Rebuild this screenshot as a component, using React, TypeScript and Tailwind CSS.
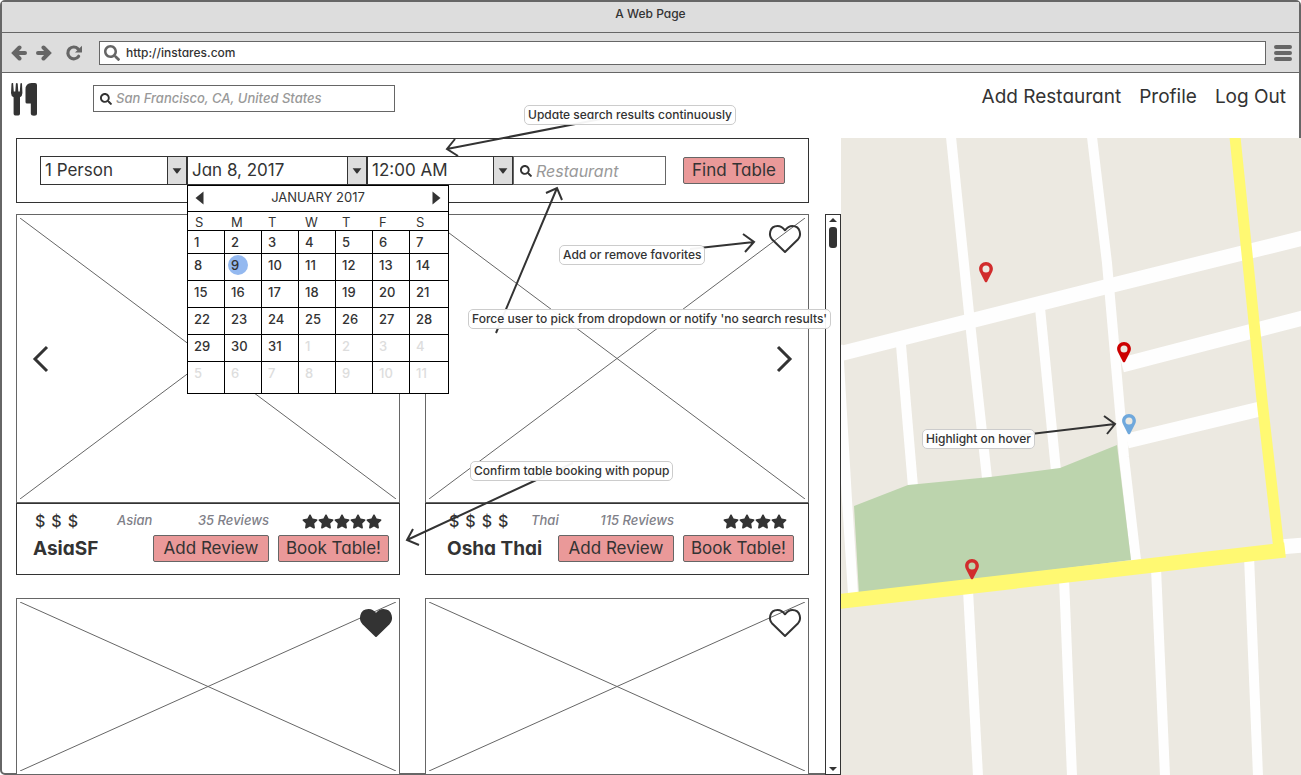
import React from "react";
import { FaSearch, FaStar } from "react-icons/fa";

const weekdays = ["S", "M", "T", "W", "T", "F", "S"];

const weeks = [
  { height: "h-[23px]", days: [1, 2, 3, 4, 5, 6, 7] },
  { height: "h-[27px]", days: [8, 9, 10, 11, 12, 13, 14] },
  { height: "h-[27px]", days: [15, 16, 17, 18, 19, 20, 21] },
  { height: "h-[27px]", days: [22, 23, 24, 25, 26, 27, 28] },
  { height: "h-[27px]", days: [29, 30, 31, 1, 2, 3, 4] },
  { height: "h-[32px]", days: [5, 6, 7, 8, 9, 10, 11] },
];

function ArrowIcon({ direction }: { direction: "left" | "right" }) {
  return (
    <svg viewBox="0 0 16 16" className="size-4 fill-none stroke-[#666]" strokeWidth="4" strokeLinecap="round">
      <path
        d={direction === "left" ? "M8.500 2.500 3 8l5.500 5.500M4 8h10" : "M7.500 2.500 13 8l-5.500 5.500M12 8H2"}
        strokeLinejoin="miter"
      />
    </svg>
  );
}

function ReloadIcon() {
  return (
    <svg viewBox="0 0 16 16" className="size-4">
      <path d="M12.600 11.300A5.900 5.900 0 1 1 12 3.800" className="fill-none stroke-[#666]" strokeWidth="3.200" strokeLinecap="round" />
      <path d="M16 .8V7q0 .6-.6.600H9z" className="fill-[#666]" />
    </svg>
  );
}

function MenuIcon() {
  return (
    <svg viewBox="0 0 18 16" className="h-4 w-[18px] stroke-[#666]" strokeWidth="4" strokeLinecap="round">
      <path d="M2 2h14M2 8h14M2 14h14" />
    </svg>
  );
}

function Caret() {
  return (
    <span className="pointer-events-none absolute inset-y-0 right-0 flex w-5 items-center justify-center border border-[#333] bg-[#ddd]">
      <svg viewBox="0 0 10 6" className="h-[6px] w-[10px] fill-[#333]">
        <path d="M0.6 0.3h8.8L5.6 5.2q-.6.6-1.2 0z" />
      </svg>
    </span>
  );
}

function Picker({ label, value, className }: { label: string; value: string; className: string }) {
  return (
    <div className={`relative ${className}`}>
      <select
        aria-label={label}
        defaultValue={value}
        className="h-[29px] w-full appearance-none border border-[#333] bg-white pl-1 text-[17px] outline-none"
      >
        <option>{value}</option>
      </select>
      <Caret />
    </div>
  );
}

function Calendar() {
  return (
    <div className="absolute left-0 top-[29px] z-20 w-[262px] border border-black bg-white font-medium">
      <div className="flex h-[25px] items-center justify-between px-[7px] pb-[2px] text-[13px] font-normal">
        <button aria-label="Previous month">
          <svg viewBox="0 0 9 14" className="h-[14px] w-[9px] fill-[#333]">
            <path d="M8.5 0.5v13L0.5 7z" />
          </svg>
        </button>
        <span>JANUARY 2017</span>
        <button aria-label="Next month">
          <svg viewBox="0 0 9 14" className="h-[14px] w-[9px] fill-[#333]">
            <path d="M0.5 0.5v13L8.5 7z" />
          </svg>
        </button>
      </div>
      <table className="w-full table-fixed border-separate border-spacing-0 text-[13px] leading-[22px]">
        <colgroup>
          <col className="w-9" />
          <col className="w-[37px]" span={5} />
          <col />
        </colgroup>
        <thead>
          <tr className="h-[19px]">
            {weekdays.map((day, i) => (
              <th key={i} className="border-t border-black p-0 pl-[7px] pt-[2px] text-left font-normal leading-4">
                {day}
              </th>
            ))}
          </tr>
        </thead>
        <tbody>
          {weeks.map((week, w) => (
            <tr key={w} className={week.height}>
              {week.days.map((day, d) => {
                const outside = w > 3 && day < 15;
                const selected = w === 1 && day === 9;
                return (
                  <td
                    key={d}
                    className={`border-t border-black p-0 pl-[6px] align-top ${d > 0 ? "border-l" : ""} ${outside ? "text-[#ddd]" : ""}`}
                  >
                    {selected ? (
                      <span className="relative isolate">
                        <span className="absolute -left-[3px] -top-[2px] -z-10 size-5 rounded-full bg-[#94b9f0]" />
                        {day}
                      </span>
                    ) : (
                      day
                    )}
                  </td>
                );
              })}
            </tr>
          ))}
        </tbody>
      </table>
    </div>
  );
}

function Heart({ filled, label }: { filled?: boolean; label: string }) {
  return (
    <button aria-label={label} className="absolute right-[6px] top-[9px]">
      <svg viewBox="0 0 34 30" className="h-[30px] w-[34px]">
        <path
          d="M17 28 3.900 15.200C1.800 12.900 1.900 9.200 2.300 7.600 3.200 3.900 6.200 2 9.600 2 12.600 2 15.300 4 17 6.300 18.700 4 21.400 2 24.400 2c3.400 0 6.400 1.900 7.300 5.600.4 1.600.5 5.300-1.600 7.600z"
          className={filled ? "fill-[#333] stroke-[#333]" : "fill-none stroke-[#333]"}
          strokeWidth="2"
          strokeLinejoin="round"
        />
      </svg>
    </button>
  );
}

function Chevron({ side }: { side: "left" | "right" }) {
  return (
    <button
      aria-label={side === "left" ? "Previous" : "Next"}
      className={`absolute inset-y-0 my-auto h-7 ${side === "left" ? "left-[14px]" : "right-[14px]"}`}
    >
      <svg viewBox="0 0 18 28" className="h-7 w-[18px] fill-none stroke-[#333]" strokeWidth="3">
        <path d={side === "left" ? "M16 2 4 14l12 12" : "M2 2l12 12L2 26"} />
      </svg>
    </button>
  );
}

function Picture({ className, children }: { className: string; children?: React.ReactNode }) {
  return (
    <div className={`relative border border-[#666] bg-white p-[3px] ${className}`}>
      <svg viewBox="0 0 100 100" preserveAspectRatio="none" className="block h-full w-full stroke-[#666]">
        <path d="M0 0 100 100M0 100 100 0" vectorEffect="non-scaling-stroke" strokeWidth="1" />
      </svg>
      {children}
    </div>
  );
}

const pinkButton =
  "flex h-[27px] items-center justify-center whitespace-nowrap rounded-[2px] border border-[#666] bg-[#ea9999] text-[17px]";

type Restaurant = {
  name: string;
  price: number;
  cuisine: string;
  reviews: number;
  stars: number;
  padding: string;
};

function Info({ name, price, cuisine, reviews, stars, padding }: Restaurant) {
  return (
    <div className={`flex h-[72px] flex-col border border-[#333] bg-white pt-[7px] ${padding}`}>
      <div className="flex h-[20px] items-center text-[13px] font-medium">
        <span className="flex w-[84px] gap-[6px] pl-[2px] text-[16px]">
          {Array.from({ length: price }, (_, i) => (
            <span key={i}>$</span>
          ))}
        </span>
        <span className="italic text-[#808088]">{cuisine}</span>
        <span className="ml-auto italic text-[#808088]">{reviews} Reviews</span>
        <span className="ml-[9px] flex w-[111px] justify-end pr-[7px]" role="img" aria-label={`${stars} stars`}>
          {Array.from({ length: stars }, (_, i) => (
            <FaStar key={i} className="h-[15px] w-4 text-[#333]" />
          ))}
        </span>
      </div>
      <div className="mt-1 flex items-center gap-[9px]">
        <h2 className="mr-auto whitespace-nowrap text-[19px] font-bold leading-6">{name}</h2>
        <button className={`${pinkButton} w-[116px]`}>Add Review</button>
        <button className={`${pinkButton} w-[111px]`}>Book Table!</button>
      </div>
    </div>
  );
}

function Pin({ label, place, color }: { label: string; place: string; color: string }) {
  return (
    <button aria-label={label} className={`absolute ${place}`}>
      <svg viewBox="0 0 14 21" className={`h-[21px] w-[14px] ${color}`}>
        <path
          fillRule="evenodd"
          d="M7 0C3 0 .1 3 .1 6.800c0 1.200.2 2 .7 3L5.900 19.700c.4.800 1.800.8 2.200 0L13.200 9.800c.5-1 .7-1.800.7-3C13.900 3 11 0 7 0zM7 3.400a3.500 3.500 0 1 1 0 7 3.500 3.500 0 0 1 0-7z"
        />
      </svg>
    </button>
  );
}

function StreetMap() {
  return (
    <section aria-label="Map" className="relative overflow-hidden bg-[#ece9e1]">
      <svg
        viewBox="841 138 460 637"
        preserveAspectRatio="xMinYMin slice"
        className="absolute inset-0 h-full w-full fill-none"
      >
        <g className="stroke-[#fefefe]" strokeWidth="10">
          <path d="M951 137 969 313 987 478" />
          <path d="M1092 137 1107 263 1124 457 1136 560" />
          <path d="M901 345 913 487" />
          <path d="M1040 308 1056 471" />
          <path d="M838 345 847 500 853 594" />
          <path d="M968 590 978 776" />
          <path d="M1064 578 1072 776" />
          <path d="M1156 568 1165 776" />
          <path d="M1249 556 1258 776" />
        </g>
        <g className="stroke-[#fefefe]" strokeWidth="15">
          <path d="M839 354 1113 285 1303 238" />
          <path d="M1122 365 1303 318" />
          <path d="M1127 441 1260 409" />
          <path d="M1280 547 1303 545" />
        </g>
        <path d="M854 506 908 485 990 477 1060 468 1117 445 1131 560 859 594z" className="fill-[#bcd4ad]" />
        <path d="M1235 137 1262 400 1279 550" className="stroke-[#fff972]" strokeWidth="11" />
        <path d="M839 601.500 1285 550" className="stroke-[#fff972]" strokeWidth="15" />
      </svg>
      <Pin label="Restaurant on the north side" place="left-[138px] top-[124px]" color="fill-[#d12c2c]" />
      <Pin label="Restaurant on the main street" place="left-[276px] top-[204px]" color="fill-[#cc0000]" />
      <Pin label="Highlighted restaurant" place="left-[281px] top-[276px]" color="fill-[#6fa8dc]" />
      <Pin label="Restaurant by the park" place="left-[124px] top-[421px]" color="fill-[#d12c2c]" />
    </section>
  );
}

const notes = [
  { text: "Update search results continuously", place: "left-[524px] top-[105px]" },
  { text: "Add or remove favorites", place: "left-[559px] top-[245px]" },
  { text: "Force user to pick from dropdown or notify 'no search results'", place: "left-[468px] top-[309px]" },
  { text: "Confirm table booking with popup", place: "left-[470px] top-[461px]" },
  { text: "Highlight on hover", place: "left-[922px] top-[429px]" },
];

function Notes() {
  return (
    <div className="pointer-events-none absolute -left-[2px] -top-[2px] z-30">
      <svg viewBox="0 0 1200 600" className="block h-[600px] w-[1200px] fill-none stroke-[#333]" strokeWidth="2">
        <path d="M606 118 447 149M455 139 447 149 458 156" />
        <path d="M690 249 754 242M743 234 754 242 745 252" />
        <path d="M496 333 557 188M546 193 557 188 562 200" />
        <path d="M573 463 407 540M413 529 407 540 419 545" />
        <path d="M1014 436 1115 424M1104 416 1115 424 1107 434" />
      </svg>
      {notes.map((note) => (
        <p
          key={note.text}
          className={`absolute h-5 whitespace-nowrap rounded-[5px] border border-[#ccc] bg-white/95 px-[3px] text-[12px] font-medium leading-[18px] ${note.place}`}
        >
          {note.text}
        </p>
      ))}
    </div>
  );
}

export default function App() {
  return (
    <div className="relative flex min-h-screen flex-col rounded-[5px] border-2 border-[#666] bg-white font-['Inter',sans-serif] text-[#333] [font-feature-settings:'cv11']">
      <div className="flex h-[31px] items-start justify-center border-b border-[#666] bg-[#ddd] pt-[3px] text-[12px] font-medium leading-[18px]">
        A Web Page
      </div>
      <div className="flex h-10 items-center border-b border-[#666] bg-[#ddd] pl-[9px] pr-[7px] text-[#666]">
        <button aria-label="Back">
          <ArrowIcon direction="left" />
        </button>
        <button aria-label="Forward" className="ml-[9px]">
          <ArrowIcon direction="right" />
        </button>
        <button aria-label="Reload" className="ml-[14px]">
          <ReloadIcon />
        </button>
        <div className="ml-[17px] mr-2 flex h-6 flex-1 items-center border border-[#666] bg-white pl-1">
          <FaSearch className="size-4" />
          <input
            aria-label="Address"
            defaultValue="http://instares.com"
            className="ml-[6px] min-w-0 flex-1 bg-transparent text-[12px] font-medium text-[#333] outline-none"
          />
        </div>
        <button aria-label="Menu">
          <MenuIcon />
        </button>
      </div>
      <header className="flex h-[65px] items-start pl-[9px] pr-[13px]">
        <svg viewBox="0 0 27 33" className="mt-[10px] h-[33px] w-[27px] fill-[#333]" role="img" aria-label="Instares">
          <path d="M1.200 0h.9l.7 8.500h1.500L4.900.4q.9-.8 1.800 0l.6 8.100h1.500L9.400.4q.9-.8 1.600.1L11.400 10q0 3-2.400 4.300v16.100q0 2.200-3.200 2.200t-3.200-2.200V14.300Q0 13 0 10L.5.500z" />
          <path d="M20.500 0H24q2 0 2 2v28.500q0 2.200-3 2.200t-3.200-2.200V20.500h-3.700q-1.600 0-1.600-1.600V6.500Q14.500 0 20.500 0z" />
        </svg>
        <label className="ml-[55px] mt-[12px] flex h-[27px] w-[302px] items-center border border-[#666] px-[6px]">
          <FaSearch className="size-3" />
          <input
            aria-label="Location"
            placeholder="San Francisco, CA, United States"
            className="ml-1 min-w-0 flex-1 bg-transparent text-[13px] font-medium italic outline-none placeholder:text-[#999]"
          />
        </label>
        <nav className="ml-auto mt-[10px] flex gap-[18px] text-[19px] leading-7">
          <a href="#add">Add Restaurant</a>
          <a href="#profile">Profile</a>
          <a href="#logout">Log Out</a>
        </nav>
      </header>
      <main className="-mb-[2px] -mr-[2px] grid flex-1 grid-cols-[minmax(0,839fr)_minmax(0,460fr)]">
        <div className="flex flex-col pl-[14px]">
          <form className="mr-8 flex h-[65px] items-start border border-[#333] pl-[23px] pt-[17px]">
            <Picker label="Party size" value="1 Person" className="w-[147px]" />
            <div className="relative w-[180px]">
              <Picker label="Date" value="Jan 8, 2017" className="w-full" />
              <Calendar />
            </div>
            <Picker label="Time" value="12:00 AM" className="w-[146px]" />
            <label className="flex h-[29px] w-[153px] items-center border border-[#666] px-[6px]">
              <FaSearch className="size-3 shrink-0" />
              <input
                aria-label="Restaurant"
                placeholder="Restaurant"
                className="ml-1 min-w-0 flex-1 bg-transparent text-[16px] italic outline-none placeholder:text-[#999]"
              />
            </label>
            <button type="button" className={`${pinkButton} ml-[17px] mt-px w-[102px]`}>
              Find Table
            </button>
          </form>
          <div className="mt-[11px] flex flex-1">
            <div className="grid flex-1 grid-cols-2 content-start gap-x-[25px] gap-y-[23px]">
              <article>
                <Picture className="h-[289px]">
                  <Chevron side="left" />
                </Picture>
                <Info name="AsiaSF" price={3} cuisine="Asian" reviews={35} stars={5} padding="pl-[16px] pr-[10px]" />
              </article>
              <article>
                <Picture className="h-[289px]">
                  <Heart label="Add Osha Thai to favorites" />
                  <Chevron side="right" />
                </Picture>
                <Info name="Osha Thai" price={4} cuisine="Thai" reviews={115} stars={4} padding="pl-[21px] pr-[14px]" />
              </article>
              <Picture className="h-[177px]">
                <Heart filled label="Remove from favorites" />
              </Picture>
              <Picture className="h-[177px]">
                <Heart label="Add to favorites" />
              </Picture>
            </div>
            <div className="ml-4 flex w-4 flex-col items-center border border-[#333] bg-white">
              <svg viewBox="0 0 8 4" className="mt-[3px] h-1 w-2 fill-[#333]">
                <path d="M0 4h8L4 0z" />
              </svg>
              <div className="mt-[5px] h-[21px] w-2 rounded-[3px] bg-[#333]" />
              <svg viewBox="0 0 8 4" className="mb-[3px] mt-auto h-1 w-2 fill-[#333]">
                <path d="M0 0h8L4 4z" />
              </svg>
            </div>
          </div>
        </div>
        <StreetMap />
      </main>
      <Notes />
    </div>
  );
}
